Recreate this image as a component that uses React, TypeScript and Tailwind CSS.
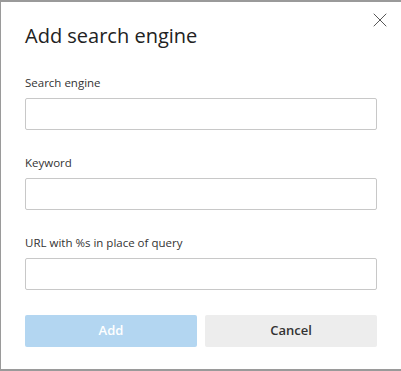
import { X } from 'lucide-react'

const fields = ['Search engine', 'Keyword', 'URL with %s in place of query']

export default function App() {
  return (
    <div
      className="relative h-[371px] w-[401px] overflow-hidden border-t-2 border-b-2 border-l border-[#9a9a9a] bg-white"
      style={{ fontFamily: '"Segoe UI", "Open Sans", "Noto Sans", sans-serif' }}
    >
      <button className="absolute left-[367px] top-[6px] text-[#444]" aria-label="Close">
        <X size={24} strokeWidth={0.9} />
      </button>
      <div className="px-6 pt-[20px]">
        <h1 className="text-[20px] leading-[28px] text-[#222]">Add search engine</h1>
        <div className="mt-[25px] flex flex-col gap-[25px]">
          {fields.map((label) => (
            <div key={label} className="flex flex-col">
              <label className="text-[11.5px] leading-[16px] text-[#333]">{label}</label>
              <input
                type="text"
                className="mt-[7px] h-[32px] w-[352px] rounded-[2px] border border-[#c8c8c8] bg-white px-2 text-[13px] outline-none"
              />
            </div>
          ))}
        </div>
        <div className="mt-[25px] flex gap-2">
          <button className="h-[32px] w-[172px] rounded-[2px] bg-[#b3d6f1] text-[13px] font-semibold text-white">
            Add
          </button>
          <button className="h-[32px] w-[172px] rounded-[2px] bg-[#ededed] text-[13px] font-semibold text-[#333]">
            Cancel
          </button>
        </div>
      </div>
    </div>
  )
}
